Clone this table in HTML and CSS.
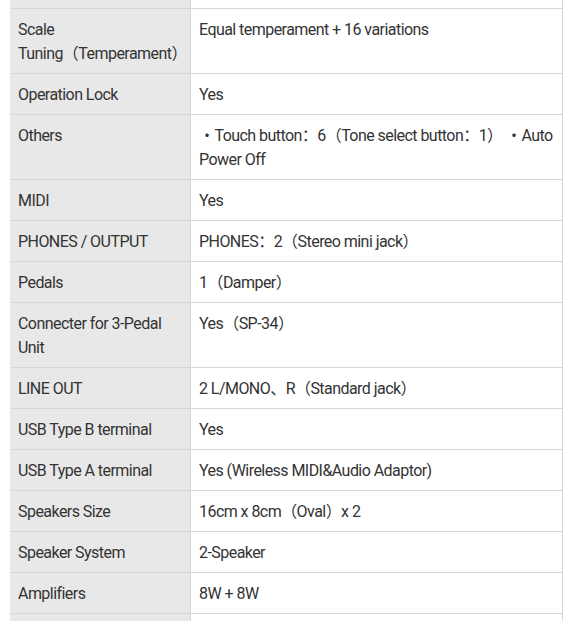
FILE: index.html
```html
<!DOCTYPE html>
<html lang="en">
<head>
<meta charset="utf-8">
<title>Specifications</title>
<link rel="stylesheet" href="styles.css">
</head>
<body>
<div class="wrap">
<table class="spec">
<tbody>
<tr class="partial"><th>&nbsp;</th><td>&nbsp;</td></tr>
<tr><th>Scale<br>Tuning（Temperament）</th><td>Equal temperament + 16 variations</td></tr>
<tr><th>Operation Lock</th><td>Yes</td></tr>
<tr><th>Others</th><td>・Touch button：6（Tone select button：1） ・Auto Power Off</td></tr>
<tr><th>MIDI</th><td>Yes</td></tr>
<tr><th>PHONES / OUTPUT</th><td>PHONES：2（Stereo mini jack）</td></tr>
<tr><th>Pedals</th><td>1（Damper）</td></tr>
<tr><th>Connecter for 3-Pedal Unit</th><td>Yes（SP-34）</td></tr>
<tr><th>LINE OUT</th><td>2 L/MONO、R（Standard jack）</td></tr>
<tr><th>USB Type B terminal</th><td>Yes</td></tr>
<tr><th>USB Type A terminal</th><td>Yes (Wireless MIDI&amp;Audio Adaptor)</td></tr>
<tr><th>Speakers Size</th><td>16cm x 8cm（Oval）x 2</td></tr>
<tr><th>Speaker System</th><td>2-Speaker</td></tr>
<tr><th>Amplifiers</th><td>8W + 8W</td></tr>
<tr class="partial"><th>&nbsp;</th><td>&nbsp;</td></tr>
</tbody>
</table>
</div>
</body>
</html>
```
FILE: styles.css
```css
html, body {
  margin: 0;
  padding: 0;
  background: #fff;
}
.wrap {
  padding-left: 10px;
  margin-top: -32px;
}
.spec {
  border-collapse: separate;
  border-spacing: 0;
  width: 553px;
  table-layout: fixed;
  font-family: Roboto, "Noto Sans CJK SC", sans-serif;
  font-size: 16px;
  line-height: 24px;
  color: #333;
  letter-spacing: -0.55px;
}
.spec th,
.spec td {
  box-sizing: border-box;
  padding: 9px 8px 7px;
  text-align: left;
  vertical-align: top;
  font-weight: normal;
  border-bottom: 1px solid #d6d6d6;
  border-right: 1px solid #d6d6d6;
}
.spec th {
  width: 181px;
  background: #e8e8e8;
}
.spec td {
  background: #fff;
}
```
